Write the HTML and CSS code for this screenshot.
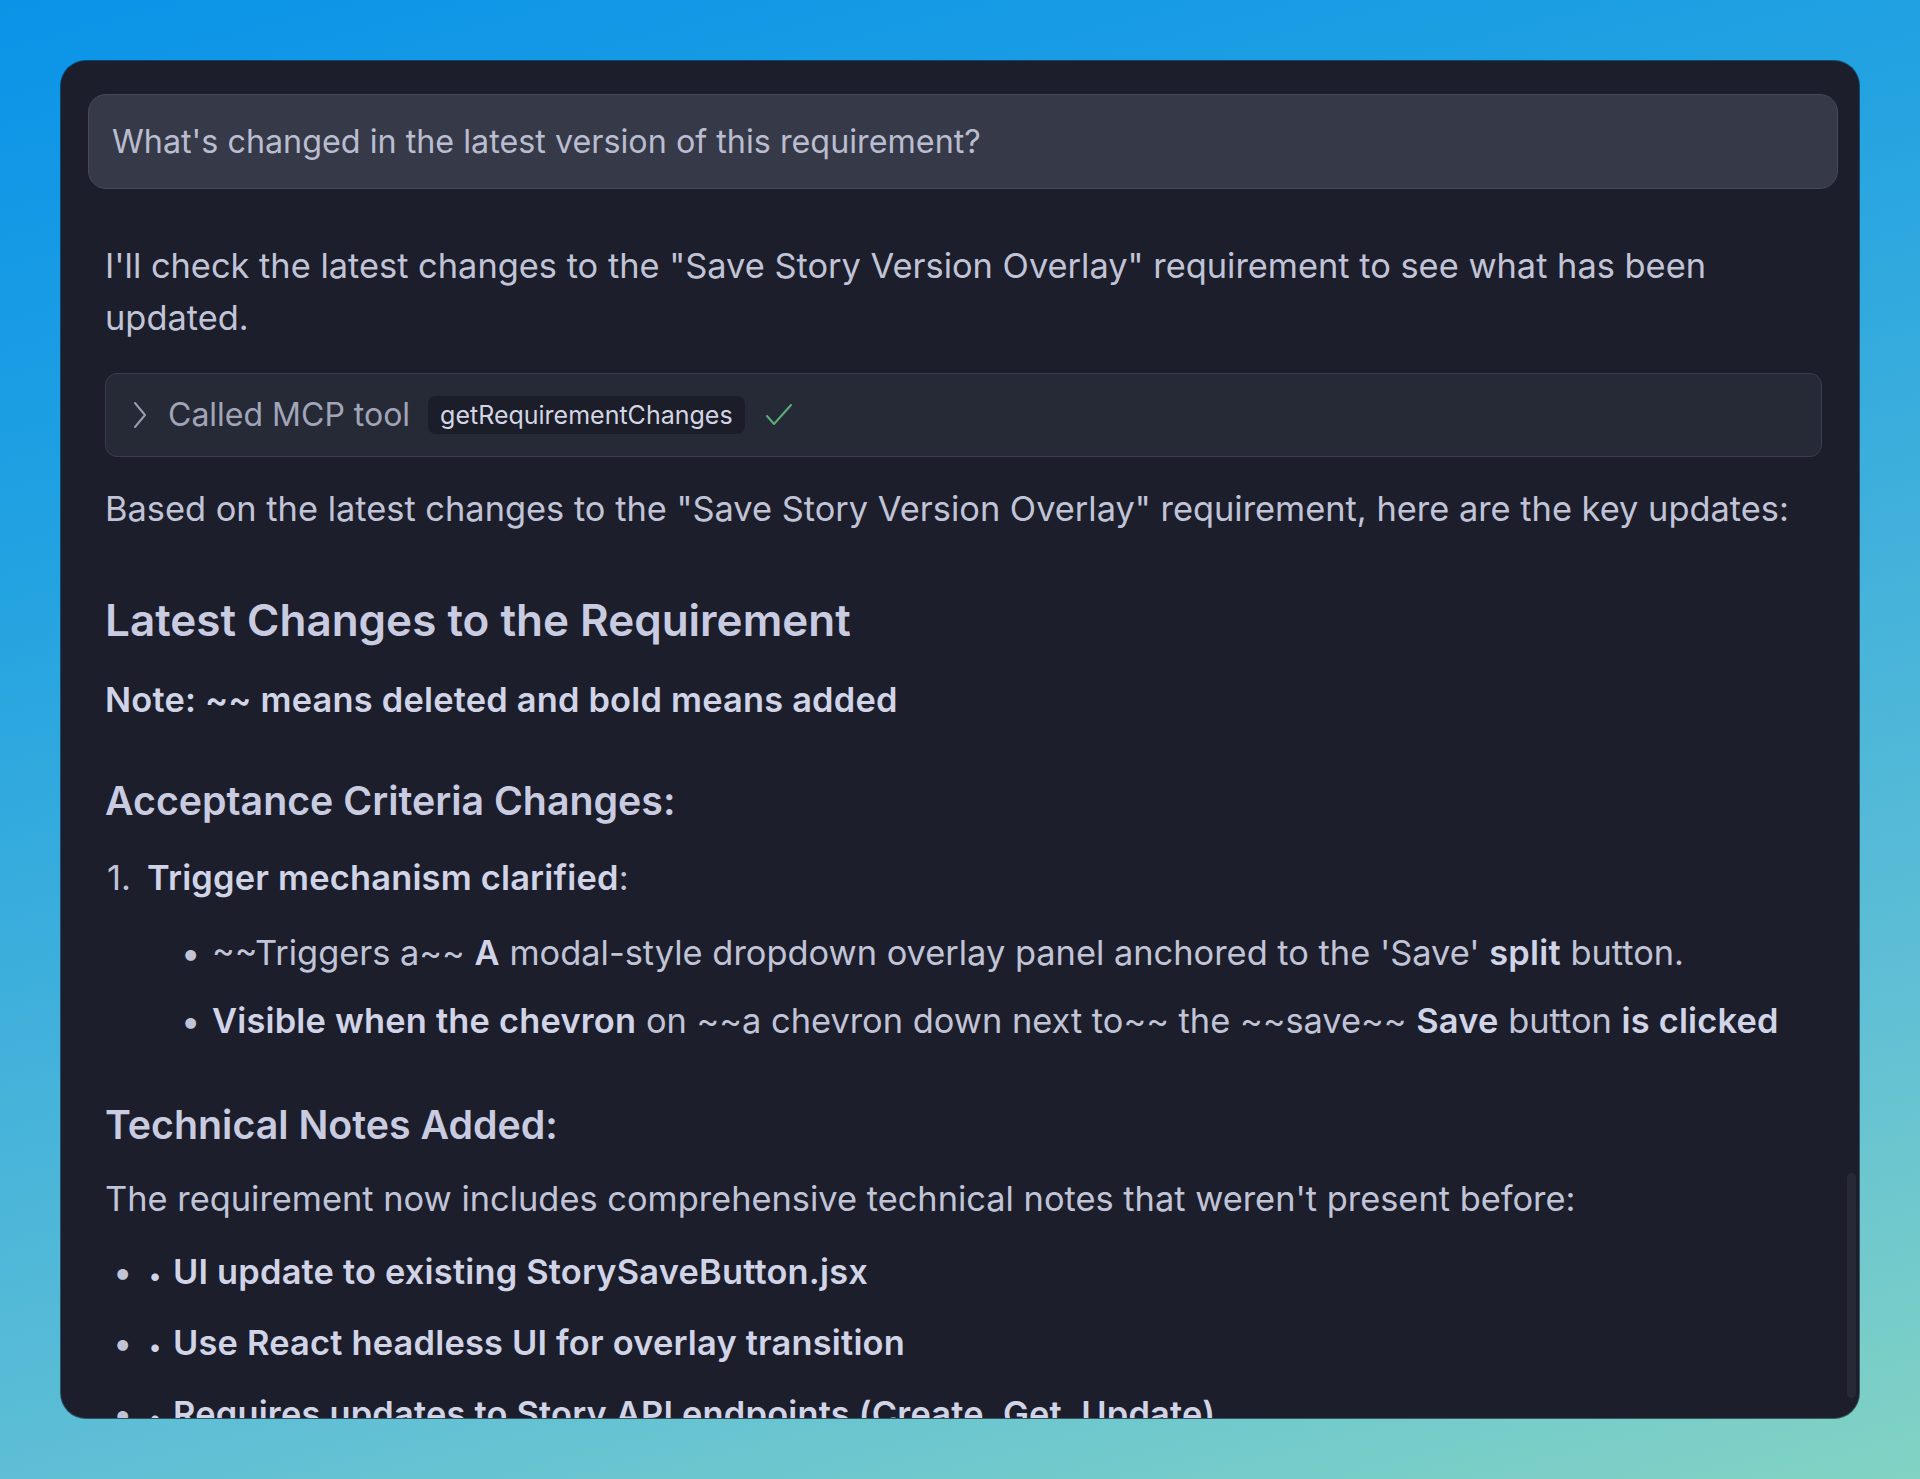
FILE: index.html
```html
<!DOCTYPE html>
<html lang="en">
<head>
<meta charset="utf-8">
<title>Requirement changes</title>
<link rel="stylesheet" href="styles.css">
</head>
<body>
<div class="stage">
  <main class="card">
    <div class="prompt">What's changed in the latest version of this requirement?</div>
    <div class="thread">
      <p class="p1">I'll check the latest changes to the "Save Story Version Overlay" requirement to see what has been updated.</p>
      <div class="tool">
        <svg class="chev" width="16" height="28" viewBox="0 0 16 28"><polyline points="3,2 13,14 3,26" fill="none" stroke="#9a9db0" stroke-width="2" stroke-linecap="round" stroke-linejoin="round"/></svg>
        <span class="tool-label">Called MCP tool</span>
        <span class="pill">getRequirementChanges</span>
        <svg class="check" width="28" height="24" viewBox="0 0 28 24"><polyline points="2,13 9,21 26,2" fill="none" stroke="#5aae77" stroke-width="2" stroke-linecap="round" stroke-linejoin="round"/></svg>
      </div>
      <p class="p2">Based on the latest changes to the "Save Story Version Overlay" requirement, here are the key updates:</p>
      <h2>Latest Changes to the Requirement</h2>
      <p class="note"><b>Note: ~~ means deleted and bold means added</b></p>
      <h3 class="h3a">Acceptance Criteria Changes:</h3>
      <ol class="ol">
        <li class="oli"><span class="num">1.</span><div class="oli-body"><div class="line"><b>Trigger mechanism clarified</b>:</div>
          <ul class="sub">
            <li class="s1"><span class="dot">•</span><span>~~Triggers a~~ <b>A</b> modal-style dropdown overlay panel anchored to the 'Save' <b>split</b> button.</span></li>
            <li class="s2"><span class="dot">•</span><span><b>Visible when the chevron</b> on ~~a chevron down next to~~ the ~~save~~ <b>Save</b> button <b>is clicked</b></span></li>
          </ul>
        </div></li>
      </ol>
      <h3 class="h3b">Technical Notes Added:</h3>
      <p class="p3">The requirement now includes comprehensive technical notes that weren't present before:</p>
      <ul class="notes">
        <li><span class="dot2">•</span><b><span class="inner">•</span>UI update to existing StorySaveButton.jsx</b></li>
        <li><span class="dot2">•</span><b><span class="inner">•</span>Use React headless UI for overlay transition</b></li>
        <li><span class="dot2">•</span><b><span class="inner">•</span>Requires updates to Story API endpoints (Create, Get, Update)</b></li>
      </ul>
    </div>
    <div class="scrollthumb"></div>
  </main>
</div>
</body>
</html>
```

FILE: styles.css
```css
* { box-sizing: border-box; }
html, body { margin: 0; padding: 0; }
body {
  width: 1920px;
  height: 1479px;
  overflow: hidden;
  font-family: Inter, "Noto Sans", "Liberation Sans", sans-serif;
  background: linear-gradient(165deg, #0a93e8 0%, #24a3e1 30%, #5fbfd5 75%, #82d3c3 100%);
}
.stage {
  padding: 61px;
}
.card {
  position: relative;
  width: 1798px;
  height: 1357px;
  background: #1c1e2b;
  border-radius: 25px;
  overflow: hidden;
  padding: 33px 21px 0 27px;
  box-shadow: 0 0 0 1px rgba(10, 14, 30, 0.6);
}
.prompt {
  height: 95px;
  background: #363948;
  border: 1.5px solid #454959;
  border-radius: 18px;
  display: flex;
  align-items: center;
  padding-left: 23px;
  font-size: 32.3px;
  color: #babdcf;
}
.thread {
  padding: 0 16px 0 17px;
  color: #c1c4d7;
  font-size: 34.4px;
  line-height: 52px;
}
.thread b { font-weight: 600; color: #d1d4e6; letter-spacing: 0.2px; }
p { margin: 0; }
.p1 { margin-top: 51px; }
.tool {
  margin-top: 29px;
  height: 84px;
  background: #262936;
  border: 1.5px solid #3a3d4d;
  border-radius: 12px;
  display: flex;
  align-items: center;
  padding-left: 26px;
}
.chev { margin-right: 20px; }
.tool-label { color: #a2a5b8; font-size: 32px; margin-right: 18px; }
.pill {
  height: 38px;
  display: flex;
  align-items: center;
  padding: 0 12px;
  background: #1b1d29;
  border-radius: 8px;
  font-size: 25px;
  color: #d3d5e3;
  margin-right: 20px;
}
.check { display: block; }
.p2 { margin-top: 26px; }
h2 {
  margin: 55px 0 0;
  font-size: 44px;
  line-height: 60px;
  font-weight: 600;
  color: #c9cce0;
}
.note { margin-top: 24px; }
h3 {
  margin: 0;
  font-size: 39.3px;
  line-height: 52px;
  font-weight: 600;
  color: #c9cce0;
}
.h3a { margin-top: 49px; }
.ol { list-style: none; margin: 25px 0 0; padding: 0; }
.oli { display: flex; }
.num { width: 42px; padding-left: 2px; }
.sub { list-style: none; margin: 23px 0 0; padding: 0 0 0 34px; }
.sub li { display: flex; }
.s2 { margin-top: 16px; }
.dot { width: 31px; }
.h3b { margin-top: 52px; }
.p3 { margin-top: 22px; }
.notes { list-style: none; margin: 21px 0 0; padding: 0; }
.notes li { display: flex; margin-bottom: 15px; }
.dot2 { width: 44px; padding-left: 8px; }
.inner { display: inline-block; width: 24px; font-size: 24px; letter-spacing: 0; }
.scrollthumb {
  position: absolute;
  right: 3px;
  top: 1112px;
  width: 9px;
  height: 225px;
  border-radius: 5px;
  background: #262936;
}
```
